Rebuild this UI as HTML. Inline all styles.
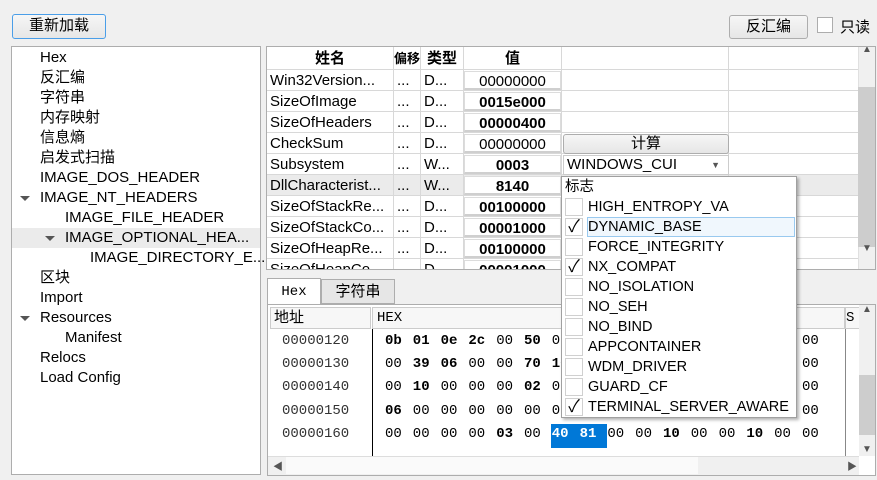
<!DOCTYPE html>
<html style="overflow:hidden;height:480px"><head><meta charset="utf-8"><style>
*{box-sizing:border-box;margin:0;padding:0}
body{width:877px;height:480px;background:#f0f0f0;font-family:"Liberation Sans","Noto Sans CJK SC",sans-serif;font-size:15px;color:#000;position:relative;overflow:hidden}
.a{position:absolute;white-space:nowrap}
.btn{position:absolute;border:1px solid #adadad;border-radius:3px;background:linear-gradient(#f6f6f6,#e6e6e6);text-align:center;line-height:21px}
.tree{position:absolute;left:11px;top:46px;width:250px;height:429px;background:#fff;border:1px solid #adadad}
.ti{position:absolute;line-height:20px}
.tri{position:absolute;width:0;height:0;border-left:5px solid transparent;border-right:5px solid transparent;border-top:5px solid #555}
.tbl{position:absolute;left:266px;top:46px;width:610px;height:224px;background:#fff;border:1px solid #adadad;overflow:hidden}
.hd{position:absolute;top:0;height:23px;border-right:1px solid #d8d8d8;border-bottom:1px solid #d8d8d8;background:#fff;font-weight:bold;text-align:center;line-height:23px}
.c{position:absolute;height:21px;line-height:21px;border-right:1px solid #d8d8d8;border-bottom:1px solid #d8d8d8;padding-left:3px;overflow:hidden}
.v{position:absolute;height:19px;line-height:19px;background:#fff;border:1px solid #dcdcdc;border-bottom:2px solid #cfcfcf;text-align:center}
.pop{position:absolute;left:561px;top:176px;width:236px;height:242px;background:#fff;border:1px solid #a0a0a0;box-shadow:2px 2px 3px rgba(0,0,0,.3);font-size:14.5px}
.pi{position:absolute;left:26px;line-height:20px}
.cb{position:absolute;left:3px;width:18px;height:18px;border:1px solid #d0d0d0;background:#fff;font-size:17px;line-height:16px;text-align:center}
.hx{position:absolute;left:267px;top:304px;width:609px;height:172px;background:#fff;border:1px solid #adadad;overflow:hidden}
.row{position:absolute;left:0;font-family:"Liberation Mono",monospace;font-size:14px}
.row span{display:inline-block;width:27.8px}
.b{font-weight:bold}
</style></head><body>
<div class="btn" style="left:12px;top:14px;width:94px;height:25px;border-color:#4a9ee8">重新加载</div>
<div class="btn" style="left:729px;top:15px;width:79px;height:24px">反汇编</div>
<div class="a" style="left:817px;top:17px;width:16px;height:16px;border:1px solid #adadad;background:#fff"></div>
<div class="a" style="left:840px;top:16px">只读</div>

<div class="tree">
<div class="ti" style="left:28px;top:1px">Hex</div>
<div class="ti" style="left:28px;top:21px">反汇编</div>
<div class="ti" style="left:28px;top:41px">字符串</div>
<div class="ti" style="left:28px;top:61px">内存映射</div>
<div class="ti" style="left:28px;top:81px">信息熵</div>
<div class="ti" style="left:28px;top:101px">启发式扫描</div>
<div class="ti" style="left:28px;top:121px">IMAGE_DOS_HEADER</div>
<div class="tri" style="left:8px;top:149px"></div>
<div class="ti" style="left:28px;top:141px">IMAGE_NT_HEADERS</div>
<div class="ti" style="left:53px;top:161px">IMAGE_FILE_HEADER</div>
<div class="a" style="left:0;top:181px;width:248px;height:20px;background:#ebebeb"></div>
<div class="tri" style="left:33px;top:189px"></div>
<div class="ti" style="left:53px;top:181px">IMAGE_OPTIONAL_HEA...</div>
<div class="ti" style="left:78px;top:201px">IMAGE_DIRECTORY_E...</div>
<div class="ti" style="left:28px;top:221px">区块</div>
<div class="ti" style="left:28px;top:241px">Import</div>
<div class="tri" style="left:8px;top:269px"></div>
<div class="ti" style="left:28px;top:261px">Resources</div>
<div class="ti" style="left:53px;top:281px">Manifest</div>
<div class="ti" style="left:28px;top:301px">Relocs</div>
<div class="ti" style="left:28px;top:321px">Load Config</div>
</div>

<div class="tbl">
<div class="hd" style="left:0;width:127px">姓名</div>
<div class="hd" style="left:127px;width:27px;font-size:13px">偏移</div>
<div class="hd" style="left:154px;width:43px">类型</div>
<div class="hd" style="left:197px;width:98px">值</div>
<div class="hd" style="left:295px;width:167px"></div>
<div class="hd" style="left:462px;width:130px"></div>
<div style="position:absolute;left:0;top:128px;width:592px;height:21px;background:#ebebeb"></div>
<div id="rows"></div>
<div class="a" style="left:591px;top:0;width:18px;height:224px;background:#f0f0f0;border-left:1px solid #e0e0e0"></div>
<div class="a" style="left:591px;top:40px;width:18px;height:160px;background:#cdcdcd"></div>
<div class="a" style="left:595px;top:-3px;font-size:10px;color:#555">▲</div>
<div class="a" style="left:595px;top:196px;font-size:10px;color:#555">▼</div>
<div class="btn" style="left:296px;top:87px;width:166px;height:20px;line-height:18px">计算</div>
<div class="a" style="left:296px;top:108px;width:166px;height:20px;background:#fff;border:1px solid #ccc;line-height:18px;padding-left:3px">WINDOWS_CUI<span style="position:absolute;right:8px;font-size:9px;color:#555">▼</span></div>
</div>

<div class="a" style="left:267px;top:278px;width:54px;height:27px;background:#fff;border:1px solid #adadad;border-bottom:none;font-family:'Liberation Mono',monospace;font-size:14px;text-align:center;line-height:26px">Hex</div>
<div class="a" style="left:321px;top:279px;width:74px;height:25px;background:#e6e6e6;border:1px solid #adadad;text-align:center;line-height:24px">字符串</div>
<div class="hx">
<div class="a" style="left:2px;top:2px;width:101px;height:22px;border:1px solid #ccc;background:#f7f7f7;padding-left:3px;line-height:20px">地址</div>
<div class="a" style="left:104px;top:2px;width:473px;height:22px;border:1px solid #ccc;background:#f7f7f7;padding-left:4px;line-height:20px;font-family:'Liberation Mono',monospace;font-size:14px">HEX</div>
<div class="a" style="left:577px;top:2px;width:15px;height:22px;border:1px solid #ccc;background:#f7f7f7;line-height:20px;font-family:'Liberation Mono',monospace;font-size:14px">S</div>
<div class="a" style="left:104px;top:24px;width:1px;height:127px;background:#000"></div>
<div class="a" style="left:577px;top:24px;width:1px;height:127px;background:#888"></div>
<div class="a" style="left:283px;top:119px;width:56px;height:24px;background:#0078d7"></div>
<div id="hexrows"></div>
<div class="a" style="left:591px;top:0;width:17px;height:151px;background:#f0f0f0"></div>
<div class="a" style="left:591px;top:70px;width:17px;height:60px;background:#cdcdcd"></div>
<div class="a" style="left:594px;top:-1px;font-size:10px;color:#555">▲</div>
<div class="a" style="left:594px;top:139px;font-size:10px;color:#555">▼</div>
<div class="a" style="left:0;top:151px;width:591px;height:19px;background:#f0f0f0;border-top:1px solid #ddd"></div>
<div class="a" style="left:18px;top:152px;width:412px;height:17px;background:#fafafa"></div>
<div class="a" style="left:5px;top:153px;font-size:10px;color:#555">◀</div>
<div class="a" style="left:579px;top:153px;font-size:10px;color:#555">▶</div>
</div>

<div class="pop">
<div class="a" style="left:3px;top:0;line-height:20px">标志</div>
<div class="a" style="left:25px;top:40px;width:208px;height:20px;border:1px solid #99c9ef;background:#f0f7fd"></div>
<div id="flags"></div>
</div>

<script>
var rows=[["Win32Version...","D...","00000000",0],["SizeOfImage","D...","0015e000",1],["SizeOfHeaders","D...","00000400",1],["CheckSum","D...","00000000",0],["Subsystem","W...","0003",1],["DllCharacterist...","W...","8140",1],["SizeOfStackRe...","D...","00100000",1],["SizeOfStackCo...","D...","00001000",1],["SizeOfHeapRe...","D...","00100000",1],["SizeOfHeapCo...","D...","00001000",1]];
var h="";rows.forEach(function(r,i){var t=23+i*21;
h+='<div class="c" style="left:0;top:'+t+'px;width:127px">'+r[0]+'</div><div class="c" style="left:127px;top:'+t+'px;width:27px">...</div><div class="c" style="left:154px;top:'+t+'px;width:43px">'+r[1]+'</div><div class="c" style="left:197px;top:'+t+'px;width:98px"></div><div class="c" style="left:295px;top:'+t+'px;width:167px"></div><div class="c" style="left:462px;top:'+t+'px;width:130px"></div><div class="v" style="left:197px;top:'+(t+1)+'px;width:97px;'+(r[3]?'font-weight:bold':'')+'">'+r[2]+'</div>';});
document.getElementById("rows").innerHTML=h;
var hr=[["00000120","0b 01 0e 2c 00 50 00 00 00 50 00 00 00 00 00 00"],["00000130","00 39 06 00 00 70 10 00 00 00 00 00 00 00 00 00"],["00000140","00 10 00 00 00 02 00 00 00 00 00 00 00 00 00 00"],["00000150","06 00 00 00 00 00 00 00 00 00 00 00 00 00 00 00"],["00000160","00 00 00 00 03 00 40 81 00 00 10 00 00 10 00 00"]];
h="";hr.forEach(function(r,i){var t=28+i*23.2;h+='<div class="row" style="top:'+t+'px;left:14px;color:#333">'+r[0]+'</div><div class="row" style="top:'+t+'px;left:117px">';
r[1].split(" ").forEach(function(b,j){var s=(i==4&&(j==6||j==7))?"color:#fff;":"";h+='<span class="'+(b!="00"?"b":"")+'" style="'+s+'">'+b+'</span>'});h+='</div>';});
document.getElementById("hexrows").innerHTML=h;
var f=[["HIGH_ENTROPY_VA",0],["DYNAMIC_BASE",1],["FORCE_INTEGRITY",0],["NX_COMPAT",1],["NO_ISOLATION",0],["NO_SEH",0],["NO_BIND",0],["APPCONTAINER",0],["WDM_DRIVER",0],["GUARD_CF",0],["TERMINAL_SERVER_AWARE",1]];
h="";f.forEach(function(x,i){var t=20+i*20;h+='<div class="cb" style="top:'+(t+1)+'px">'+(x[1]?'✓':'')+'</div><div class="pi" style="top:'+t+'px">'+x[0]+'</div>'});
document.getElementById("flags").innerHTML=h;
</script>
</body></html>
